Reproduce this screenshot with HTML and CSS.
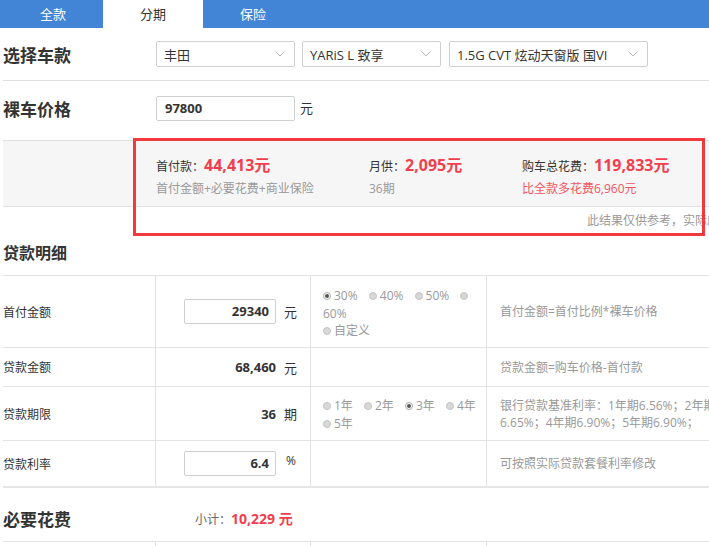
FILE: index.html
```html
<!DOCTYPE html>
<html lang="zh-CN">
<head>
<meta charset="utf-8">
<title>分期计算</title>
<link rel="stylesheet" href="styles.css">
</head>
<body>
<div class="page">
  <nav class="tabs">
    <a class="tab">全款</a>
    <a class="tab active">分期</a>
    <a class="tab">保险</a>
  </nav>

  <div class="main">
    <div class="form-row row-select">
      <div class="label">选择车款</div>
      <div class="select w1"><span>丰田</span><svg class="chev" width="10" height="6" viewBox="0 0 10 6"><polyline points="0.5,0.5 5,5 9.5,0.5" fill="none" stroke="#b8b8b8" stroke-width="1"/></svg></div>
      <div class="select w2"><span>YARiS L 致享</span><svg class="chev" width="10" height="6" viewBox="0 0 10 6"><polyline points="0.5,0.5 5,5 9.5,0.5" fill="none" stroke="#b8b8b8" stroke-width="1"/></svg></div>
      <div class="select w3"><span>1.5G CVT 炫动天窗版 国VI</span><svg class="chev" width="10" height="6" viewBox="0 0 10 6"><polyline points="0.5,0.5 5,5 9.5,0.5" fill="none" stroke="#b8b8b8" stroke-width="1"/></svg></div>
    </div>

    <div class="form-row row-price">
      <div class="label">裸车价格</div>
      <div class="price-input">97800</div>
      <span class="price-unit">元</span>
    </div>

    <div class="summary-wrap">
      <div class="summary">
        <div class="sum-item s1">
          <div class="sum-main">首付款：<b>44,413元</b></div>
          <div class="sum-sub">首付金额+必要花费+商业保险</div>
        </div>
        <div class="sum-item s2">
          <div class="sum-main">月供：<b>2,095元</b></div>
          <div class="sum-sub">36期</div>
        </div>
        <div class="sum-item s3">
          <div class="sum-main">购车总花费：<b>119,833元</b></div>
          <div class="sum-sub red">比全款多花费6,960元</div>
        </div>
      </div>
      <div class="note">此结果仅供参考，实际应付以当地经销商报价为准</div>
      <div class="highlight"></div>
    </div>

    <h2 class="section-title">贷款明细</h2>
    <div class="table">
      <div class="tr r1">
        <div class="td c1">首付金额</div>
        <div class="td c2"><div class="num-input">29340</div><span class="unit">元</span></div>
        <div class="td c3">
          <span class="radio on"><i></i>30%</span>
          <span class="radio"><i></i>40%</span>
          <span class="radio"><i></i>50%</span>
          <span class="radio split"><i></i></span> <span class="radio">60%</span><br>
          <span class="radio"><i></i>自定义</span>
        </div>
        <div class="td c4">首付金额=首付比例*裸车价格</div>
      </div>
      <div class="tr r2">
        <div class="td c1">贷款金额</div>
        <div class="td c2"><b class="val">68,460</b><span class="unit">元</span></div>
        <div class="td c3"></div>
        <div class="td c4">贷款金额=购车价格-首付款</div>
      </div>
      <div class="tr r3">
        <div class="td c1">贷款期限</div>
        <div class="td c2"><b class="val">36</b><span class="unit">期</span></div>
        <div class="td c3">
          <span class="radio"><i></i>1年</span>
          <span class="radio"><i></i>2年</span>
          <span class="radio on"><i></i>3年</span>
          <span class="radio"><i></i>4年</span>
          <span class="radio"><i></i>5年</span>
        </div>
        <div class="td c4 nowrap">银行贷款基准利率：1年期6.56%；2年期6.65%；3年期<br>6.65%；4年期6.90%；5年期6.90%；</div>
      </div>
      <div class="tr r4">
        <div class="td c1">贷款利率</div>
        <div class="td c2"><div class="num-input">6.4</div><span class="unit pct">%</span></div>
        <div class="td c3"></div>
        <div class="td c4">可按照实际贷款套餐利率修改</div>
      </div>
    </div>

    <div class="fee-head">
      <h2 class="fee-title">必要花费</h2>
      <div class="subtotal">小计：<b>10,229 元</b></div>
    </div>
    <div class="table table2">
      <div class="tr r5">
        <div class="td c1"></div>
        <div class="td c2"></div>
        <div class="td c3"></div>
        <div class="td c4"></div>
      </div>
    </div>
  </div>
</div>
</body>
</html>
```

FILE: styles.css
```css
html, body {
  margin: 0;
  padding: 0;
  overflow: hidden;
  background: #fff;
}
body {
  font-family: "Open Sans", "Noto Sans CJK SC", sans-serif;
  color: #333;
  font-size: 12px;
}
.page {
  width: 800px;
}
.tabs {
  display: flex;
  height: 28px;
  background: #4285d7;
  padding-left: 3px;
}
.tab {
  width: 100px;
  line-height: 28px;
  text-align: center;
  color: #fff;
  font-size: 13px;
  font-family: "Noto Sans CJK SC", sans-serif;
}
.tab.active {
  background: #fff;
  color: #333;
}
.main {
  margin-left: 3px;
}
.form-row {
  display: flex;
  align-items: center;
}
.label {
  width: 153px;
  font-size: 17px;
  font-weight: bold;
  color: #333;
  font-family: "Noto Sans CJK SC", sans-serif;
}
.row-select {
  height: 52px;
  border-bottom: 1px solid #dedede;
}
.select {
  box-sizing: border-box;
  height: 26px;
  border: 1px solid #cfcfcf;
  border-radius: 2px;
  display: flex;
  align-items: center;
  justify-content: space-between;
  padding: 0 9px 0 7px;
  font-size: 13px;
  color: #333;
  margin-right: 7px;
}
.select.w1 { width: 139px; }
.select.w2 { width: 139px; margin-right: 8px; }
.select.w3 { width: 199px; }
.chev { flex: none; }
.row-price {
  box-sizing: border-box;
  height: 59px;
  align-items: flex-start;
  padding-top: 15px;
}
.row-price .label { line-height: 25px; }
.price-input {
  box-sizing: border-box;
  width: 139px;
  height: 25px;
  border: 1px solid #cfcfcf;
  border-radius: 2px;
  padding-left: 8px;
  line-height: 23px;
  font-size: 13px;
  font-weight: bold;
}
.price-unit {
  margin-left: 5px;
  font-size: 13px;
  line-height: 25px;
}
.summary-wrap {
  position: relative;
}
.summary {
  display: flex;
  background: #f6f6f6;
  border-top: 1px solid #e0e0e0;
  border-bottom: 1px solid #e0e0e0;
  padding-left: 153px;
  box-sizing: border-box;
  height: 67px;
  padding-top: 13px;
}
.sum-item.s1 { width: 213px; }
.sum-item.s2 { width: 153px; }
.sum-main {
  font-size: 12px;
  color: #333;
  line-height: 22px;
}
.sum-main b {
  font-size: 16px;
  color: #f23e4d;
}
.sum-sub {
  font-size: 12px;
  color: #999;
  line-height: 20px;
  margin-top: 1px;
}
.sum-sub.red { color: #f5535f; }
.note {
  height: 29px;
  line-height: 28px;
  padding-left: 584px;
  white-space: nowrap;
  color: #999;
  font-size: 12px;
}
.highlight {
  position: absolute;
  left: 130px;
  top: -2px;
  width: 572px;
  height: 98px;
  box-sizing: border-box;
  border: 3px solid #f2393d;
}
.section-title {
  margin: 0;
  height: 39px;
  line-height: 32px;
  font-size: 16px;
  font-weight: bold;
  font-family: "Noto Sans CJK SC", sans-serif;
  color: #333;
}
.table {
  border-top: 1px solid #e3e3e3;
  border-bottom: 2px solid #e6e6e6;
}
.tr {
  display: flex;
  border-bottom: 1px solid #e3e3e3;
}
.tr:last-child { border-bottom: none; }
.td {
  box-sizing: border-box;
  display: flex;
  align-items: center;
  flex-shrink: 0;
}
.c1 { width: 152px; font-size: 12px; color: #333; }
.c2 {
  width: 155px;
  border-left: 1px solid #e3e3e3;
  justify-content: flex-end;
  padding-right: 14px;
}
.c3 {
  width: 176px;
  border-left: 1px solid #e3e3e3;
  padding: 0 2px 0 12px;
  display: block;
  line-height: 17.5px;
  color: #999;
}
.c4 {
  flex: 1 1 0;
  min-width: 0;
  overflow: hidden;
  border-left: 1px solid #e3e3e3;
  padding: 0 40px 0 13px;
  color: #999;
  line-height: 17px;
}
.c4.nowrap { white-space: nowrap; }
.r1 { height: 71px; }
.r2 { height: 38px; }
.r3 { height: 53px; }
.r4 { height: 45px; }
.r1 .td, .r2 .td, .r3 .td, .r4 .td { height: 100%; }
.r1 .c3 { padding-top: 11px; }
.r3 .c3 { padding-top: 10px; }
.num-input {
  box-sizing: border-box;
  width: 92px;
  height: 25px;
  border: 1px solid #cfcfcf;
  border-radius: 2px;
  text-align: right;
  padding-right: 6px;
  line-height: 23px;
  font-size: 13px;
  font-weight: bold;
}
.val {
  font-size: 13px;
  font-weight: bold;
}
.unit {
  width: 20px;
  padding-left: 8px;
  box-sizing: border-box;
  font-size: 13px;
  color: #333;
}
.unit.pct {
  padding-left: 10px;
  align-self: flex-start;
  margin-top: 11px;
  font-size: 12px;
}
.radio {
  margin-right: 8px;
  font-size: 12px;
  color: #999;
  white-space: nowrap;
}
.radio.split { margin-right: 0; }
.radio i {
  display: inline-block;
  box-sizing: border-box;
  width: 8px;
  height: 8px;
  border-radius: 50%;
  background: #d8d8d8;
  border: 1px solid #c4c4c4;
  margin-right: 3px;
  vertical-align: 0;
  position: relative;
}
.radio.on i {
  background: #fff;
  border-color: #aaa;
}
.radio.on i::after {
  content: "";
  position: absolute;
  left: 1px;
  top: 1px;
  width: 4px;
  height: 4px;
  border-radius: 50%;
  background: #555;
}
.fee-head {
  display: flex;
  align-items: center;
  box-sizing: border-box;
  height: 53px;
  padding-top: 7px;
}
.fee-title {
  margin: 0;
  width: 192px;
  font-size: 17px;
  font-weight: bold;
  font-family: "Noto Sans CJK SC", sans-serif;
  color: #333;
}
.subtotal {
  font-size: 12px;
  color: #666;
}
.subtotal b {
  font-size: 14px;
  color: #f23e4d;
}
.table2 {
  border-bottom: none;
}
.r5 { height: 20px; }
.r5 .td { height: 100%; }
```
